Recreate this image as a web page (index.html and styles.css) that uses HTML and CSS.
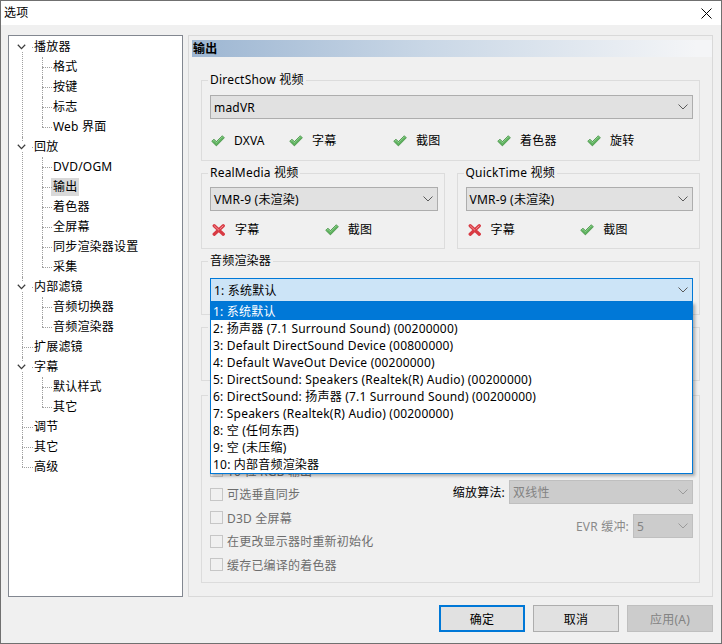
FILE: index.html
```html
<!DOCTYPE html>
<html lang="zh-CN">
<head>
    <meta charset="UTF-8">
    <title>选项</title>
    <link rel="stylesheet" href="styles.css">
</head>
<body>
    <div class="window">
        <div class="titlebar">
            <span class="title">选项</span>
            <svg class="close" width="11" height="11" viewBox="0 0 11 11">
                <path d="M0.5 0.5 L10.5 10.5 M10.5 0.5 L0.5 10.5" stroke="#000" stroke-width="1" fill="none"/>
            </svg>
        </div>

        <div class="client">
            <div class="panes">
                <!-- left navigation tree -->
                <div class="tree">
                    <ul class="lvl0">
                        <li>
                            <div class="item"><span class="twisty"><svg width="9" height="6" viewBox="0 0 9 6"><path d="M0.8 0.8 L4.5 4.6 L8.2 0.8" stroke="#3c3c3c" stroke-width="1.3" fill="none"/></svg></span><span class="label">播放器</span></div>
                            <ul class="lvl1">
                                <li><div class="item"><span class="label">格式</span></div></li>
                                <li><div class="item"><span class="label">按键</span></div></li>
                                <li><div class="item"><span class="label">标志</span></div></li>
                                <li><div class="item"><span class="label">Web 界面</span></div></li>
                            </ul>
                        </li>
                        <li>
                            <div class="item"><span class="twisty"><svg width="9" height="6" viewBox="0 0 9 6"><path d="M0.8 0.8 L4.5 4.6 L8.2 0.8" stroke="#3c3c3c" stroke-width="1.3" fill="none"/></svg></span><span class="label">回放</span></div>
                            <ul class="lvl1">
                                <li><div class="item"><span class="label">DVD/OGM</span></div></li>
                                <li><div class="item"><span class="label selected">输出</span></div></li>
                                <li><div class="item"><span class="label">着色器</span></div></li>
                                <li><div class="item"><span class="label">全屏幕</span></div></li>
                                <li><div class="item"><span class="label">同步渲染器设置</span></div></li>
                                <li><div class="item"><span class="label">采集</span></div></li>
                            </ul>
                        </li>
                        <li>
                            <div class="item"><span class="twisty"><svg width="9" height="6" viewBox="0 0 9 6"><path d="M0.8 0.8 L4.5 4.6 L8.2 0.8" stroke="#3c3c3c" stroke-width="1.3" fill="none"/></svg></span><span class="label">内部滤镜</span></div>
                            <ul class="lvl1">
                                <li><div class="item"><span class="label">音频切换器</span></div></li>
                                <li><div class="item"><span class="label">音频渲染器</span></div></li>
                            </ul>
                        </li>
                        <li><div class="item"><span class="label">扩展滤镜</span></div></li>
                        <li>
                            <div class="item"><span class="twisty"><svg width="9" height="6" viewBox="0 0 9 6"><path d="M0.8 0.8 L4.5 4.6 L8.2 0.8" stroke="#3c3c3c" stroke-width="1.3" fill="none"/></svg></span><span class="label">字幕</span></div>
                            <ul class="lvl1">
                                <li><div class="item"><span class="label">默认样式</span></div></li>
                                <li><div class="item"><span class="label">其它</span></div></li>
                            </ul>
                        </li>
                        <li><div class="item"><span class="label">调节</span></div></li>
                        <li><div class="item"><span class="label">其它</span></div></li>
                        <li><div class="item"><span class="label">高级</span></div></li>
                    </ul>
                </div>

                <!-- settings page -->
                <div class="page">
                    <div class="page-title">输出</div>

                    <fieldset class="group ds">
                        <legend>DirectShow 视频</legend>
                        <div class="combo"><span>madVR</span><svg class="arrow" width="10" height="6" viewBox="0 0 10 6"><path d="M0.5 0.5 L5 5 L9.5 0.5" stroke="#5a5a5a" stroke-width="1" fill="none"/></svg></div>
                        <div class="feats">
                            <div class="feat w78"><svg class="ico" width="14" height="12" viewBox="0 0 14 12"><path d="M0.7 6.3 L3 4.2 L5.4 6.6 L11.3 0.7 L13.4 2.8 L5.4 10.9 Z" fill="#5fb25f" stroke="#3b8a3b" stroke-width="0.7" stroke-linejoin="round"/><path d="M1.8 6.3 L3 5.3 L5.4 7.7 L11.3 1.8 L12 2.5" stroke="#9ad89a" stroke-width="0.8" fill="none"/></svg><span>DXVA</span></div>
                            <div class="feat w104"><svg class="ico" width="14" height="12" viewBox="0 0 14 12"><path d="M0.7 6.3 L3 4.2 L5.4 6.6 L11.3 0.7 L13.4 2.8 L5.4 10.9 Z" fill="#5fb25f" stroke="#3b8a3b" stroke-width="0.7" stroke-linejoin="round"/><path d="M1.8 6.3 L3 5.3 L5.4 7.7 L11.3 1.8 L12 2.5" stroke="#9ad89a" stroke-width="0.8" fill="none"/></svg><span>字幕</span></div>
                            <div class="feat w104"><svg class="ico" width="14" height="12" viewBox="0 0 14 12"><path d="M0.7 6.3 L3 4.2 L5.4 6.6 L11.3 0.7 L13.4 2.8 L5.4 10.9 Z" fill="#5fb25f" stroke="#3b8a3b" stroke-width="0.7" stroke-linejoin="round"/><path d="M1.8 6.3 L3 5.3 L5.4 7.7 L11.3 1.8 L12 2.5" stroke="#9ad89a" stroke-width="0.8" fill="none"/></svg><span>截图</span></div>
                            <div class="feat w90"><svg class="ico" width="14" height="12" viewBox="0 0 14 12"><path d="M0.7 6.3 L3 4.2 L5.4 6.6 L11.3 0.7 L13.4 2.8 L5.4 10.9 Z" fill="#5fb25f" stroke="#3b8a3b" stroke-width="0.7" stroke-linejoin="round"/><path d="M1.8 6.3 L3 5.3 L5.4 7.7 L11.3 1.8 L12 2.5" stroke="#9ad89a" stroke-width="0.8" fill="none"/></svg><span>着色器</span></div>
                            <div class="feat"><svg class="ico" width="14" height="12" viewBox="0 0 14 12"><path d="M0.7 6.3 L3 4.2 L5.4 6.6 L11.3 0.7 L13.4 2.8 L5.4 10.9 Z" fill="#5fb25f" stroke="#3b8a3b" stroke-width="0.7" stroke-linejoin="round"/><path d="M1.8 6.3 L3 5.3 L5.4 7.7 L11.3 1.8 L12 2.5" stroke="#9ad89a" stroke-width="0.8" fill="none"/></svg><span>旋转</span></div>
                        </div>
                    </fieldset>

                    <div class="group-row">
                        <fieldset class="group half">
                            <legend>RealMedia 视频</legend>
                            <div class="combo"><span>VMR-9 (未渲染)</span><svg class="arrow" width="10" height="6" viewBox="0 0 10 6"><path d="M0.5 0.5 L5 5 L9.5 0.5" stroke="#5a5a5a" stroke-width="1" fill="none"/></svg></div>
                            <div class="feats two">
                                <div class="feat"><svg class="ico" width="14" height="12" viewBox="0 0 14 12"><path d="M2.2 1.8 L11.3 10.2 M11.3 1.8 L2.2 10.2" stroke="#d83a43" stroke-width="3.3" stroke-linecap="round" fill="none"/><path d="M2.4 2 L6.7 6 M11 2 L8 4.8" stroke="#f4959a" stroke-width="1" stroke-linecap="round" fill="none"/></svg><span>字幕</span></div>
                                <div class="feat"><svg class="ico" width="14" height="12" viewBox="0 0 14 12"><path d="M0.7 6.3 L3 4.2 L5.4 6.6 L11.3 0.7 L13.4 2.8 L5.4 10.9 Z" fill="#5fb25f" stroke="#3b8a3b" stroke-width="0.7" stroke-linejoin="round"/><path d="M1.8 6.3 L3 5.3 L5.4 7.7 L11.3 1.8 L12 2.5" stroke="#9ad89a" stroke-width="0.8" fill="none"/></svg><span>截图</span></div>
                            </div>
                        </fieldset>
                        <fieldset class="group half">
                            <legend>QuickTime 视频</legend>
                            <div class="combo"><span>VMR-9 (未渲染)</span><svg class="arrow" width="10" height="6" viewBox="0 0 10 6"><path d="M0.5 0.5 L5 5 L9.5 0.5" stroke="#5a5a5a" stroke-width="1" fill="none"/></svg></div>
                            <div class="feats two">
                                <div class="feat"><svg class="ico" width="14" height="12" viewBox="0 0 14 12"><path d="M2.2 1.8 L11.3 10.2 M11.3 1.8 L2.2 10.2" stroke="#d83a43" stroke-width="3.3" stroke-linecap="round" fill="none"/><path d="M2.4 2 L6.7 6 M11 2 L8 4.8" stroke="#f4959a" stroke-width="1" stroke-linecap="round" fill="none"/></svg><span>字幕</span></div>
                                <div class="feat"><svg class="ico" width="14" height="12" viewBox="0 0 14 12"><path d="M0.7 6.3 L3 4.2 L5.4 6.6 L11.3 0.7 L13.4 2.8 L5.4 10.9 Z" fill="#5fb25f" stroke="#3b8a3b" stroke-width="0.7" stroke-linejoin="round"/><path d="M1.8 6.3 L3 5.3 L5.4 7.7 L11.3 1.8 L12 2.5" stroke="#9ad89a" stroke-width="0.8" fill="none"/></svg><span>截图</span></div>
                            </div>
                        </fieldset>
                    </div>

                    <fieldset class="group audio">
                        <legend>音频渲染器</legend>
                        <div class="dropdown">
                            <div class="combo focused"><span>1: 系统默认</span><svg class="arrow" width="10" height="6" viewBox="0 0 10 6"><path d="M0.5 0.5 L5 5 L9.5 0.5" stroke="#5a5a5a" stroke-width="1" fill="none"/></svg></div>
                            <ul class="listbox">
                                <li class="active">1: 系统默认</li>
                                <li>2: 扬声器 (7.1 Surround Sound) (00200000)</li>
                                <li>3: Default DirectSound Device (00800000)</li>
                                <li>4: Default WaveOut Device (00200000)</li>
                                <li>5: DirectSound: Speakers (Realtek(R) Audio) (00200000)</li>
                                <li>6: DirectSound: 扬声器 (7.1 Surround Sound) (00200000)</li>
                                <li>7: Speakers (Realtek(R) Audio) (00200000)</li>
                                <li>8: 空 (任何东西)</li>
                                <li>9: 空 (未压缩)</li>
                                <li>10: 内部音频渲染器</li>
                            </ul>
                        </div>
                    </fieldset>

                    <fieldset class="group subs">
                        <legend>字幕渲染器</legend>
                        <div class="combo"><span>内部字幕渲染器</span><svg class="arrow" width="10" height="6" viewBox="0 0 10 6"><path d="M0.5 0.5 L5 5 L9.5 0.5" stroke="#5a5a5a" stroke-width="1" fill="none"/></svg></div>
                    </fieldset>

                    <fieldset class="group evr">
                        <legend>EVR/VMR-9 渲染器设置</legend>
                        <div class="evr-body">
                            <div class="checks">
                                <label class="check"><span class="box"></span>全浮点处理</label>
                                <label class="check"><span class="box"></span>半浮点处理</label>
                                <label class="check"><span class="box"></span>10 位 RGB 输出</label>
                                <label class="check"><span class="box"></span>可选垂直同步</label>
                                <label class="check"><span class="box"></span>D3D 全屏幕</label>
                                <label class="check"><span class="box"></span>在更改显示器时重新初始化</label>
                                <label class="check"><span class="box"></span>缓存已编译的着色器</label>
                            </div>
                            <div class="options">
                                <div class="opt">
                                    <span class="opt-label">缩放算法:</span>
                                    <div class="combo disabled w184"><span>双线性</span><svg class="arrow" width="10" height="6" viewBox="0 0 10 6"><path d="M0.5 0.5 L5 5 L9.5 0.5" stroke="#9a9a9a" stroke-width="1" fill="none"/></svg></div>
                                </div>
                                <div class="opt second">
                                    <span class="opt-label dim">EVR 缓冲:</span>
                                    <div class="combo disabled w60"><span>5</span><svg class="arrow" width="10" height="6" viewBox="0 0 10 6"><path d="M0.5 0.5 L5 5 L9.5 0.5" stroke="#9a9a9a" stroke-width="1" fill="none"/></svg></div>
                                </div>
                            </div>
                        </div>
                    </fieldset>
                </div>
            </div>

            <div class="buttons">
                <button class="btn default">确定</button>
                <button class="btn">取消</button>
                <button class="btn" disabled>应用(A)</button>
            </div>
        </div>
    </div>
</body>
</html>
```

FILE: styles.css
```css
* {
    box-sizing: border-box;
}

body {
    margin: 0;
    background-color: #f0f0f0;
    font-family: "Noto Sans", "Noto Sans CJK SC", sans-serif;
    font-size: 12px;
    letter-spacing: 0.2px;
    color: #000;
}

.window {
    width: 722px;
    height: 644px;
    border: 1px solid #707070;
    background-color: #f0f0f0;
    display: flex;
    flex-direction: column;
}

.titlebar {
    height: 24px;
    background-color: #fff;
    display: flex;
    align-items: center;
    justify-content: space-between;
    padding: 0 9px 0 3px;
}

.title {
    line-height: 16px;
    margin-top: -1px;
}

.close {
    display: block;
    margin-top: 1px;
}

.client {
    padding: 10px 8px 0 7px;
}

.panes {
    display: flex;
    gap: 5px;
    height: 562px;
}

/* tree */

.tree {
    width: 175px;
    height: 100%;
    border: 1px solid #828790;
    background-color: #fff;
    padding-top: 1px;
    overflow: hidden;
}

.tree ul {
    list-style: none;
    margin: 0;
    padding: 0;
}

.tree li {
    position: relative;
}

.lvl0 > li {
    padding-left: 25px;
}

.lvl1 > li {
    padding-left: 19px;
}

.tree li::before {
    content: "";
    position: absolute;
    top: 0;
    bottom: 0;
    border-left: 1px dotted #a0a0a0;
}

.tree li::after {
    content: "";
    position: absolute;
    top: 10px;
    border-top: 1px dotted #a0a0a0;
}

.lvl0 > li::before {
    left: 13px;
}

.lvl0 > li::after {
    left: 13px;
    width: 11px;
}

.lvl1 > li::before {
    left: 8px;
}

.lvl1 > li::after {
    left: 8px;
    width: 10px;
}

.tree li:first-child::before {
    top: 10px;
}

.tree .lvl1 > li:first-child::before {
    top: 0;
}

.tree li:last-child::before {
    bottom: auto;
    height: 10px;
}

.item {
    display: flex;
    align-items: center;
    height: 20px;
}

.twisty {
    position: relative;
    z-index: 1;
    width: 16px;
    height: 10px;
    margin-left: -19px;
    margin-right: 3px;
    background-color: #fff;
    display: flex;
    align-items: center;
    justify-content: center;
}

.twisty svg {
    display: block;
    margin-left: -3px;
}

.label {
    line-height: 18px;
    white-space: nowrap;
}

.label.selected {
    background-color: #d9d9d9;
    padding: 0 2px;
    margin-left: -2px;
}

/* page */

.page {
    width: 525px;
    height: 100%;
    border: 1px solid #d9d9d9;
    padding: 4px 12px 0 3px;
    overflow: hidden;
}

.page-title {
    height: 17px;
    line-height: 17px;
    font-weight: bold;
    padding-left: 1px;
    margin-right: -12px;
    background: linear-gradient(to right, #9db6d2, #c9d7e6 45%, #f4f5f7 97%);
}

.group {
    margin: 0 0 0 9px;
    padding: 0 6px 0 8px;
    border: 1px solid #dcdcdc;
    min-width: 0;
}

.group legend {
    padding: 0 2px;
    margin-left: -2px;
    line-height: 16px;
}

.ds {
    margin-top: 15px;
    padding-bottom: 11px;
}

.ds .combo {
    margin-top: 7px;
}

.group-row {
    display: flex;
    gap: 12px;
    margin: 4px 0 0 9px;
}

.group-row .group {
    margin-left: 0;
    flex: 1;
    padding-bottom: 10px;
}

.half .combo {
    margin-top: 6px;
}

.audio {
    margin-top: 4px;
    padding-bottom: 12px;
}

.audio .dropdown {
    margin-top: 9px;
}

.subs {
    margin-top: 4px;
    padding-bottom: 13px;
}

.subs .combo {
    margin-top: 8px;
}

.evr {
    margin-top: 6px;
    height: 196px;
}

/* combo boxes */

.combo {
    height: 24px;
    border: 1px solid #adadad;
    background-color: #e1e1e1;
    display: flex;
    align-items: center;
    justify-content: space-between;
    padding: 0 4px 0 3px;
    white-space: nowrap;
}

.combo .arrow {
    display: block;
    flex: none;
}

.combo.focused {
    background-color: #cce4f7;
    border-color: #0078d7;
}

.combo.disabled {
    background-color: #cccccc;
    border-color: #bfbfbf;
    color: #838383;
}

.w184 {
    width: 184px;
}

.w60 {
    width: 60px;
}

.dropdown {
    position: relative;
}

.listbox {
    position: absolute;
    z-index: 5;
    top: 100%;
    left: 0;
    right: 0;
    margin: 0;
    padding: 0;
    list-style: none;
    background-color: #fff;
    border: 1px solid #0078d7;
    box-shadow: 2px 2px 3px rgba(0, 0, 0, 0.3);
}

.listbox li {
    height: 17px;
    line-height: 17px;
    padding-left: 2px;
    white-space: nowrap;
}

.listbox li.active {
    background-color: #0078d7;
    color: #fff;
}

/* feature rows */

.feats {
    display: flex;
    margin-top: 14px;
    height: 16px;
    padding-left: 1px;
}

.feats.two {
    margin-top: 11px;
    display: grid;
    grid-template-columns: 1fr 1fr;
    padding-left: 2px;
}

.feat {
    display: flex;
    align-items: center;
    gap: 9px;
    line-height: 16px;
}

.feat .ico {
    display: block;
    flex: none;
}

.w78 {
    width: 78px;
}

.w104 {
    width: 104px;
}

.w90 {
    width: 90px;
}

/* evr group */

.evr-body {
    display: flex;
    justify-content: space-between;
}

.checks {
    display: flex;
    flex-direction: column;
    padding-top: 9px;
}

.check {
    display: flex;
    align-items: center;
    gap: 4px;
    height: 23.5px;
    color: #6d6d6d;
}

.box {
    width: 13px;
    height: 13px;
    border: 1px solid #c6c6c6;
    background-color: #f0f0f0;
}

.options {
    display: flex;
    flex-direction: column;
    align-items: flex-end;
    padding-top: 77px;
}

.opt {
    display: flex;
    align-items: center;
    gap: 4px;
}

.opt.second {
    margin-top: 10px;
}

.opt-label.dim {
    color: #8a8a8a;
}

/* bottom buttons */

.buttons {
    display: flex;
    justify-content: flex-end;
    gap: 8px;
    margin-top: 8px;
}

.btn {
    width: 86px;
    height: 27px;
    font-family: inherit;
    font-size: 12px;
    letter-spacing: 0.2px;
    background-color: #e1e1e1;
    border: 1px solid #adadad;
    color: #000;
    padding: 0;
}

.btn.default {
    border: 2px solid #0078d7;
}

.btn:disabled {
    background-color: #cccccc;
    border-color: #bfbfbf;
    color: #838383;
}
```
